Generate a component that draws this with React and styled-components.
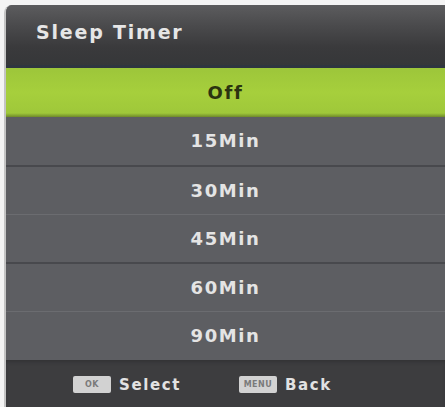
import React from "react";
import styled, { createGlobalStyle } from "styled-components";

const GlobalStyle = createGlobalStyle`
  html, body {
    margin: 0;
    padding: 0;
    background: #f4f4f4;
  }
  body {
    font-family: "DejaVu Sans", "Liberation Sans", sans-serif;
  }
`;

const Screen = styled.div`
  width: 445px;
  height: 407px;
  padding: 5px 0 0 4px;
  box-sizing: border-box;
  overflow: hidden;
`;

const Panel = styled.div`
  height: 100%;
  display: flex;
  flex-direction: column;
  background: #5d5e62;
  border-left: 2px solid #c4c4c4;
  border-top-left-radius: 8px;
  overflow: hidden;
`;

const Header = styled.div`
  height: 63px;
  display: flex;
  align-items: center;
  padding-left: 30px;
  padding-bottom: 6px;
  box-sizing: border-box;
  background: linear-gradient(180deg, #5c5c5e 0%, #4a4a4c 35%, #3a3a3c 70%, #363739 100%);
  border-bottom: 3px solid #2f3540;
`;

const Title = styled.div`
  color: #e6e6e6;
  font-size: 19px;
  font-weight: bold;
  letter-spacing: 1.8px;
`;

const List = styled.div`
  display: flex;
  flex-direction: column;
`;

const Option = styled.div`
  height: 48.6px;
  display: flex;
  align-items: center;
  justify-content: center;
  box-sizing: border-box;
  font-size: 18px;
  font-weight: bold;
  letter-spacing: 1.6px;
  color: ${(p) => (p.$active ? "#2b3410" : "#e4e4e4")};
  background: ${(p) =>
    p.$active
      ? "linear-gradient(180deg, #9dc63a 0%, #a6cf3c 50%, #9fc83a 92%, #6f8a2a 100%)"
      : "#5d5e62"};
  border-top: ${(p) =>
    p.$line === "dark"
      ? "2px solid #48494d"
      : p.$line === "light"
      ? "1px solid #6b6c70"
      : "none"};
`;

const Footer = styled.div`
  flex: 1;
  display: flex;
  align-items: center;
  padding-left: 67px;
  padding-top: 3px;
  gap: 58px;
  background: #3d3d3f;
  box-shadow: inset 0 3px 4px -2px #2e2e30;
`;

const Hint = styled.div`
  display: flex;
  align-items: center;
  gap: 8px;
  color: #e2e2e2;
  font-size: 15px;
  font-weight: bold;
  letter-spacing: 1.6px;
`;

const Key = styled.span`
  width: ${(p) => p.$w}px;
  height: 17px;
  display: inline-flex;
  align-items: center;
  justify-content: center;
  background: #d2d2d2;
  border-radius: 2px;
  color: #7a7a7a;
  font-size: 8px;
  font-weight: bold;
  letter-spacing: 0.5px;
`;

const options = [
  { label: "Off", active: true },
  { label: "15Min" },
  { label: "30Min", line: "dark" },
  { label: "45Min", line: "light" },
  { label: "60Min", line: "dark" },
  { label: "90Min", line: "light" },
];

export default function App() {
  return (
    <>
      <GlobalStyle />
      <Screen>
        <Panel>
          <Header>
            <Title>Sleep Timer</Title>
          </Header>
          <List>
            {options.map((o) => (
              <Option key={o.label} $active={o.active} $line={o.line}>
                {o.label}
              </Option>
            ))}
          </List>
          <Footer>
            <Hint>
              <Key $w={38}>OK</Key>
              Select
            </Hint>
            <Hint>
              <Key $w={38}>MENU</Key>
              Back
            </Hint>
          </Footer>
        </Panel>
      </Screen>
    </>
  );
}
